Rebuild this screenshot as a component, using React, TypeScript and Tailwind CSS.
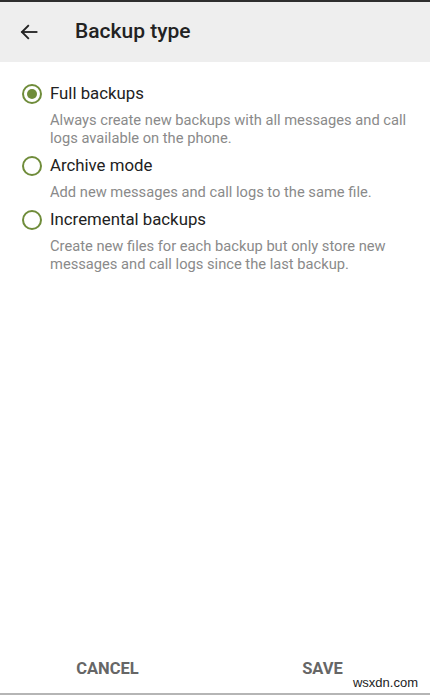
import { useState } from "react";

const options = [
  {
    id: "full",
    label: "Full backups",
    desc: "Always create new backups with all messages and call logs available on the phone.",
  },
  {
    id: "archive",
    label: "Archive mode",
    desc: "Add new messages and call logs to the same file.",
  },
  {
    id: "incremental",
    label: "Incremental backups",
    desc: "Create new files for each backup but only store new messages and call logs since the last backup.",
  },
];

function Radio({ checked }: { checked: boolean }) {
  return (
    <span className="flex h-[20px] w-[20px] shrink-0 items-center justify-center rounded-full border-[2.5px] border-[#6f8c3a]">
      {checked && <span className="h-[10px] w-[10px] rounded-full bg-[#6f8c3a]" />}
    </span>
  );
}

export default function App() {
  const [selected, setSelected] = useState("full");

  return (
    <div className="relative flex h-[695px] w-[430px] flex-col bg-white font-['Roboto',sans-serif]">
      <div className="h-[2px] bg-[#2e2e2e]" />
      <header className="flex h-[60px] items-center bg-[#eeeeee]">
        <svg className="ml-[19px] h-[20px] w-[20px]" viewBox="0 0 24 24" fill="none" stroke="#222" strokeWidth="2.2" strokeLinecap="square">
          <path d="M21 12H4" />
          <path d="M11 4.5 3.5 12l7.5 7.5" />
        </svg>
        <h1 className="ml-[36px] text-[21px] font-medium text-[#222]">Backup type</h1>
      </header>

      <div className="flex flex-col gap-[6px] pt-[19px]">
        {options.map((o) => (
          <button
            key={o.id}
            onClick={() => setSelected(o.id)}
            className="flex flex-col text-left"
          >
            <div className="flex h-[25px] items-center">
              <span className="ml-[22px]">
                <Radio checked={selected === o.id} />
              </span>
              <span className="ml-[8px] text-[16.8px] text-[#222]">{o.label}</span>
            </div>
            <p className="mt-[5px] pl-[50px] pr-[16px] text-[14.7px] leading-[18px] text-[#8a8a8a]">
              {o.desc}
            </p>
          </button>
        ))}
      </div>

      <div className="mt-auto flex h-[36px] items-start">
        <button className="w-1/2 text-[16.5px] font-bold text-[#666]">CANCEL</button>
        <button className="w-1/2 text-[16.5px] font-bold text-[#666]">SAVE</button>
      </div>
      <span className="absolute bottom-[3px] right-[12px] font-['Liberation_Sans',sans-serif] text-[13px] text-[#222]">
        wsxdn.com
      </span>
      <div className="h-[2px] bg-[#b5b5b5]" />
    </div>
  );
}
